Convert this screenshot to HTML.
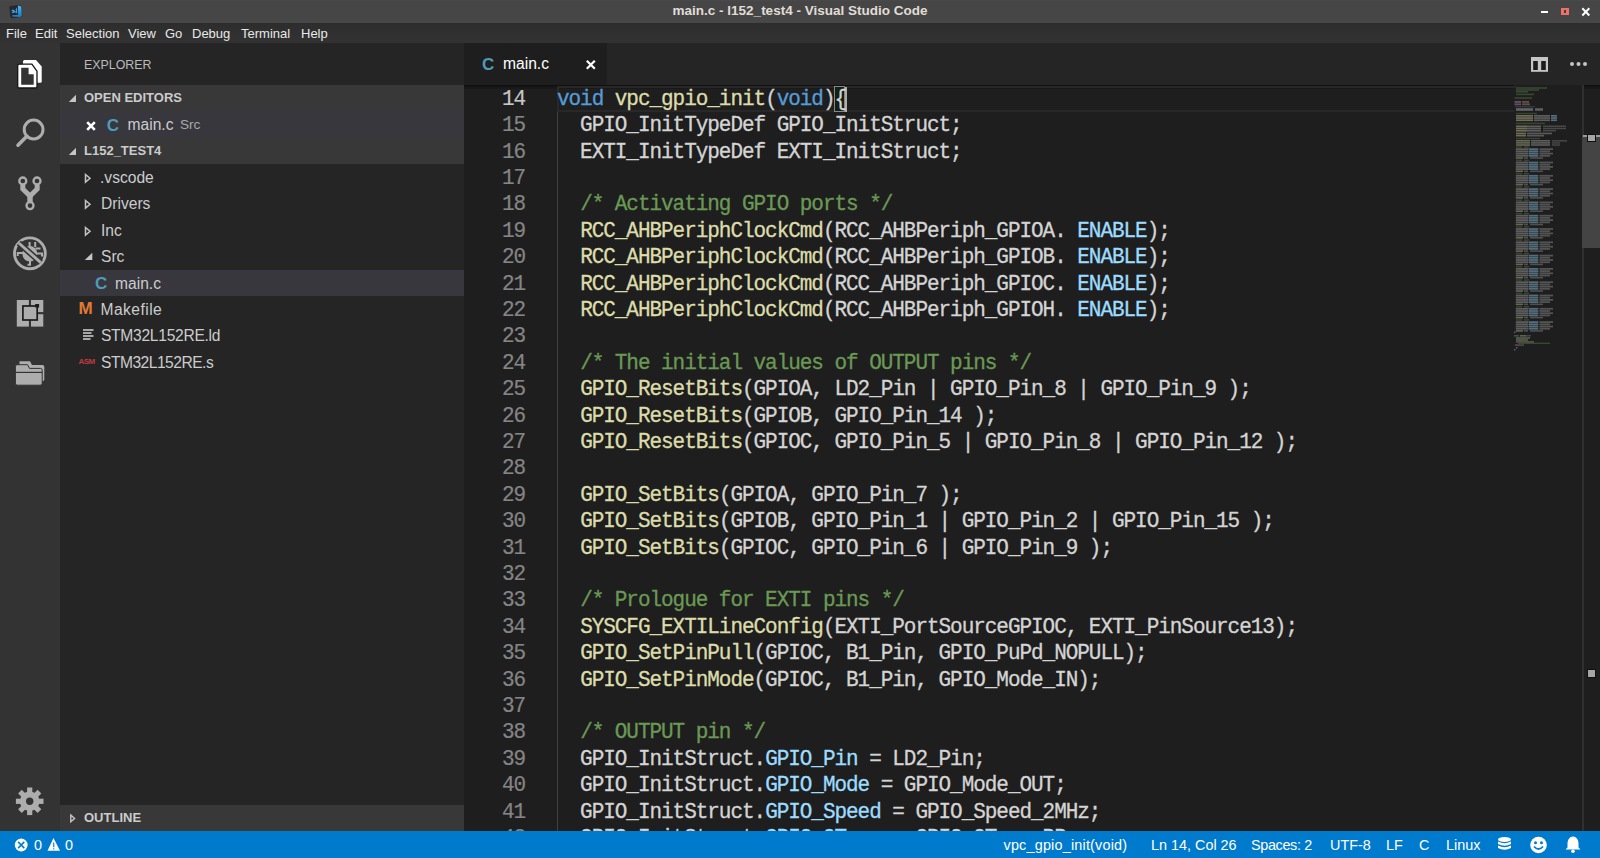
<!DOCTYPE html>
<html><head><meta charset="utf-8">
<style>
*{margin:0;padding:0;box-sizing:border-box}
html,body{width:1600px;height:858px;overflow:hidden;background:#1e1e1e;font-family:"Liberation Sans",sans-serif;position:relative}
.a{position:absolute}
.t{position:absolute;white-space:nowrap}
#title{left:0;top:0;width:1600px;height:22.5px;background:linear-gradient(#4a4a4a,#454545 8%,#474747)}
#menu{left:0;top:22.5px;width:1600px;height:20.5px;background:linear-gradient(#2d2d2d,#323232)}
.mi{position:absolute;top:26px;font-size:13px;line-height:16px;color:#e8e8e8}
#act{left:0;top:43px;width:60px;height:788px;background:#333333}
#side{left:60px;top:43px;width:404px;height:788px;background:#252526}
#tabs{left:464px;top:43px;width:1136px;height:42px;background:#252526}
#editor{left:464px;top:85px;width:1136px;height:746px;background:#1e1e1e;overflow:hidden}
#status{left:0;top:831px;width:1600px;height:27px;background:#007acc}
.st{position:absolute;top:837px;font-size:14.4px;line-height:17px;color:#ffffff;white-space:nowrap}
.hdr{position:absolute;left:60px;width:404px;height:26.4px;background:#383838}
.ht{position:absolute;font-weight:bold;font-size:13px;line-height:16px;color:#cccccc;white-space:nowrap}
.it{position:absolute;font-size:15.6px;line-height:18px;color:#cccccc;white-space:nowrap}
.code{position:absolute;left:93px;white-space:pre;transform:scaleY(1.07);transform-origin:0 18.3px;-webkit-text-stroke:0.3px currentColor;font-family:"Liberation Mono",monospace;font-size:21px;letter-spacing:-1.04px;line-height:26.4px;color:#d4d4d4}
.ln{position:absolute;left:0;width:61px;transform:scaleY(1.07);transform-origin:0 18.3px;-webkit-text-stroke:0.2px currentColor;text-align:right;font-family:"Liberation Mono",monospace;font-size:21px;letter-spacing:-1.08px;line-height:26.4px;color:#858585}
.ln.act{color:#c6c6c6}
.k{color:#569cd6}.f{color:#dcdcaa}.v{color:#9cdcfe}.c{color:#6a9955}
</style></head><body>
<!-- TITLE BAR -->
<div id="title" class="a"></div>
<div class="t" style="left:0;top:3px;width:1600px;text-align:center;font-weight:bold;font-size:13.5px;line-height:16px;color:#e0ddd6">main.c - l152_test4 - Visual Studio Code</div>
<svg class="a" style="left:0;top:0" width="30" height="22" viewBox="0 0 30 22">
  <defs><linearGradient id="lg" x1="0" y1="0" x2="0" y2="1"><stop offset="0" stop-color="#52b6f2"/><stop offset="1" stop-color="#1f78c0"/></linearGradient></defs>
  <path d="M9.3,6.3 L18,5 L21.8,6 L22.3,16.8 L11.5,18.2 L10.2,16.5 Z" fill="#25282d"/>
  <path d="M17.8,5.4 L21.3,6.6 L21.8,16.3 L19.8,17 L12,16.6 L12.3,15.2 L18.2,14.8 Z" fill="url(#lg)"/>
  <path d="M11,10.6 L13,9.6 L15,10.3 L17,7.6 L17.3,13.4 L15,12.2 L12.6,13.3 L11.5,12.3 L13.2,11.2 Z" fill="#3aa0e8"/>
  <circle cx="15.4" cy="10.6" r="0.8" fill="#1a1a2a"/>
</svg>
<div class="a" style="left:1541px;top:11px;width:7px;height:2px;background:#ffffff"></div>
<div class="a" style="left:1561px;top:8px;width:8px;height:7px;background:#f07068"></div>
<div class="a" style="left:1564.3px;top:10.3px;width:2.2px;height:3px;background:#1f4a4a"></div>
<svg class="a" style="left:1580px;top:6px" width="12" height="12" viewBox="0 0 12 12"><path d="M2.3,2.3 L9.3,9.5 M9.3,2.3 L2.3,9.5" stroke="#ffffff" stroke-width="2"/></svg>
<!-- MENU -->
<div id="menu" class="a"></div>
<div class="mi" style="left:6px">File</div><div class="mi" style="left:35px">Edit</div><div class="mi" style="left:66px">Selection</div><div class="mi" style="left:128px">View</div><div class="mi" style="left:165px">Go</div><div class="mi" style="left:192px">Debug</div><div class="mi" style="left:241px">Terminal</div><div class="mi" style="left:301px">Help</div>
<!-- ACTIVITY BAR -->
<div id="act" class="a"></div>
<svg class="a" style="left:0;top:0" width="60" height="858" viewBox="0 0 60 858">
  <!-- explorer -->
  <path d="M24.5,60 H36 L41.7,66.5 V81.3 Q41.7,82.8 40.2,82.8 H24.5 Q23,82.8 23,81.3 V61.5 Q23,60 24.5,60 Z" fill="#ffffff"/>
  <path d="M19.2,64.2 H31.9 L37,71.2 V86.5 Q37,88 35.5,88 H19.2 Q17.7,88 17.7,86.5 V65.7 Q17.7,64.2 19.2,64.2 Z" fill="#ffffff" stroke="#141414" stroke-width="1.3"/>
  <path d="M21.2,67.7 H28.6 V74.2 H33.7 V84.7 H21.2 Z" fill="#333333"/>
  <!-- search -->
  <circle cx="33.6" cy="129.5" r="9.4" fill="none" stroke="#adadad" stroke-width="3"/>
  <line x1="26.8" y1="136.3" x2="18" y2="145.2" stroke="#adadad" stroke-width="3.6" stroke-linecap="round"/>
  <!-- scm -->
  <circle cx="22.8" cy="181" r="3.5" fill="none" stroke="#adadad" stroke-width="2.3"/>
  <circle cx="37" cy="181" r="3.5" fill="none" stroke="#adadad" stroke-width="2.3"/>
  <circle cx="30" cy="205.6" r="3.5" fill="none" stroke="#adadad" stroke-width="2.3"/>
  <path d="M22.8,185 V189 L30,196 L37.2,189 V185" fill="none" stroke="#adadad" stroke-width="5" stroke-linejoin="miter"/><path d="M30,195 V202.5" fill="none" stroke="#adadad" stroke-width="5.4"/>
  <!-- debug -->
  <circle cx="29.9" cy="253.3" r="15.4" fill="none" stroke="#adadad" stroke-width="2.9"/>
  <ellipse cx="29.8" cy="253.8" rx="7.4" ry="7.8" fill="#adadad"/>
  <path d="M17.7,256 V253 H23.5 M42,256.5 V253.5 H36 M35.5,248.4 H40.5 M29.6,242 V247 M35.2,242 V247 M30,259 V264.7 H27.5" fill="none" stroke="#adadad" stroke-width="2"/>
  <line x1="18.8" y1="243" x2="40.8" y2="262.6" stroke="#333333" stroke-width="6"/>
  <line x1="18.8" y1="243" x2="40.8" y2="262.6" stroke="#adadad" stroke-width="2.9"/>
  <!-- extensions -->
  <rect x="16.8" y="300" width="26.5" height="26.6" fill="#adadad"/>
  <rect x="28.9" y="299" width="2.1" height="29" fill="#333333"/>
  <rect x="37.5" y="312.1" width="7" height="2.1" fill="#333333"/>
  <rect x="22.9" y="306" width="14.3" height="14" fill="#adadad" stroke="#1c1c1c" stroke-width="1.7"/>
  <rect x="35.2" y="304" width="3.9" height="3.5" fill="#1c1c1c"/>
  <!-- folder -->
  <path d="M19.5,361.2 H30 L32,364.9 H42.5 Q44.3,364.9 44.3,366.7 V379.5 Q44.3,381 42.8,381 H19.5 Z" fill="#adadad"/>
  <path d="M17.2,364.7 H27.5 L29.5,368.4 H40.4 Q42.2,368.4 42.2,370.2 V383.2 Q42.2,385.2 40.2,385.2 H17.4 Q15.4,385.2 15.4,383.2 V366.5 Q15.4,364.7 17.2,364.7 Z" fill="#adadad" stroke="#333333" stroke-width="1"/>
  <rect x="15.4" y="371.8" width="26.8" height="1.2" fill="#333333"/>
  <!-- gear -->
  <g transform="translate(29.7,801.3)" fill="#adadad">
    <circle r="9.8"/>
    <rect x="-2.6" y="-13.8" width="5.2" height="27.6"/>
    <rect x="-13.8" y="-2.6" width="27.6" height="5.2"/>
    <rect x="-2.6" y="-13.8" width="5.2" height="27.6" transform="rotate(45)"/>
    <rect x="-13.8" y="-2.6" width="27.6" height="5.2" transform="rotate(45)"/>
    <circle r="3.7" fill="#333333"/>
  </g>
</svg>

<!-- SIDEBAR -->
<div id="side" class="a"></div>
<div class="t" style="left:84px;top:57px;font-size:12.4px;line-height:16px;color:#bbbbbb">EXPLORER</div>
<div class="hdr" style="top:85px"></div>
<svg class="a" style="left:68px;top:94px" width="9" height="9" viewBox="0 0 9 9"><path d="M8,0.8 V8 H0.8 Z" fill="#c5c5c5"/></svg>
<div class="ht" style="left:84px;top:90px">OPEN EDITORS</div>
<div class="a" style="left:60px;top:111.4px;width:404px;height:26.4px;background:#37373d"></div>
<svg class="a" style="left:85px;top:119.5px" width="12" height="12" viewBox="0 0 12 12"><path d="M2.2,2.2 L9.8,9.8 M9.8,2.2 L2.2,9.8" stroke="#ffffff" stroke-width="2.6"/></svg>
<div class="t" style="left:106.8px;top:115.5px;font-weight:bold;font-size:17px;line-height:20px;color:#519aba">C</div>
<div class="it" style="left:127.5px;top:116px">main.c</div>
<div class="t" style="left:180px;top:116px;font-size:13.6px;line-height:17px;color:#a8a8a8">Src</div>
<div class="hdr" style="top:137.8px"></div>
<svg class="a" style="left:68px;top:147px" width="9" height="9" viewBox="0 0 9 9"><path d="M8,0.8 V8 H0.8 Z" fill="#c5c5c5"/></svg>
<div class="ht" style="left:84px;top:142.8px">L152_TEST4</div>
<!-- tree -->
<svg class="a" style="left:84px;top:173px" width="8" height="11" viewBox="0 0 8 11"><path d="M1.5,1.5 L6,5.3 L1.5,9.1 Z" fill="none" stroke="#c5c5c5" stroke-width="1.5"/></svg>
<div class="it" style="left:100px;top:169.0px">.vscode</div>
<svg class="a" style="left:84px;top:199.4px" width="8" height="11" viewBox="0 0 8 11"><path d="M1.5,1.5 L6,5.3 L1.5,9.1 Z" fill="none" stroke="#c5c5c5" stroke-width="1.5"/></svg>
<div class="it" style="left:101px;top:195.4px">Drivers</div>
<svg class="a" style="left:84px;top:225.8px" width="8" height="11" viewBox="0 0 8 11"><path d="M1.5,1.5 L6,5.3 L1.5,9.1 Z" fill="none" stroke="#c5c5c5" stroke-width="1.5"/></svg>
<div class="it" style="left:101px;top:221.8px">Inc</div>
<svg class="a" style="left:84px;top:252px" width="9" height="9" viewBox="0 0 9 9"><path d="M8.3,0.8 V8 H0.8 Z" fill="#c5c5c5"/></svg>
<div class="it" style="left:101px;top:248.2px">Src</div>
<div class="a" style="left:60px;top:269.8px;width:404px;height:26.4px;background:#37373d"></div>
<div class="t" style="left:95px;top:273.5px;font-weight:bold;font-size:17px;line-height:20px;color:#519aba">C</div>
<div class="it" style="left:115px;top:274.6px">main.c</div>
<div class="t" style="left:78.5px;top:298.5px;font-weight:bold;font-size:17px;line-height:20px;color:#e37933">M</div>
<div class="it" style="left:100.5px;top:301.0px;letter-spacing:0.45px">Makefile</div>
<svg class="a" style="left:82px;top:328px" width="12" height="13" viewBox="0 0 12 13"><path d="M1,2 H11.5 M1,5 H9.5 M1,8 H11.5 M1,11 H8.5" stroke="#d4d4d4" stroke-width="1.3"/></svg>
<div class="it" style="left:101px;top:327.4px;letter-spacing:-0.28px">STM32L152RE.ld</div>
<div class="t" style="left:78.5px;top:356.5px;font-weight:bold;font-size:8px;line-height:9px;color:#c0393f;letter-spacing:-0.6px">ASM</div>
<div class="it" style="left:101px;top:353.8px;letter-spacing:-0.5px">STM32L152RE.s</div>
<!-- outline -->
<div class="hdr" style="top:805.2px"></div>
<svg class="a" style="left:68.5px;top:812.5px" width="8" height="11" viewBox="0 0 8 11"><path d="M1.8,2 L5.6,5.4 L1.8,8.8 Z" fill="none" stroke="#c5c5c5" stroke-width="1.4"/></svg>
<div class="ht" style="left:84px;top:810px">OUTLINE</div>

<!-- TABS -->
<div id="tabs" class="a"></div>
<div class="a" style="left:464px;top:43px;width:143px;height:42px;background:#1e1e1e"></div>
<div class="t" style="left:482px;top:55px;font-weight:bold;font-size:17px;line-height:20px;color:#519aba">C</div>
<div class="t" style="left:503px;top:55px;font-size:15.6px;line-height:18px;color:#ffffff">main.c</div>
<svg class="a" style="left:585px;top:59px" width="12" height="12" viewBox="0 0 12 12"><path d="M1.8,1.8 L9.8,9.8 M9.8,1.8 L1.8,9.8" stroke="#ffffff" stroke-width="2.2"/></svg>
<svg class="a" style="left:1528px;top:54px" width="24" height="20" viewBox="0 0 24 20"><rect x="3" y="3" width="17" height="14.8" fill="#c5c5c5"/><rect x="5.2" y="7" width="4.6" height="9" fill="#1c1c1c"/><rect x="13.2" y="7" width="4.6" height="9" fill="#1c1c1c"/></svg>
<svg class="a" style="left:1566px;top:58px" width="24" height="12" viewBox="0 0 24 12">
  <circle cx="6" cy="6" r="2" fill="#c5c5c5"/><circle cx="12.5" cy="6" r="2" fill="#c5c5c5"/><circle cx="19" cy="6" r="2" fill="#c5c5c5"/>
</svg>

<!-- EDITOR -->
<div id="editor" class="a">
<div class="a" style="left:0;top:0;width:1136px;height:3.6px;box-shadow:#000 0 6px 6px -6px inset"></div>
<div class="a" style="left:93px;top:0.8px;width:1000px;height:26.4px;border:2.4px solid #282828"></div>
<div class="a" style="left:369.8px;top:0.8px;width:11.4px;height:26.2px;background:#132016;border:1.2px solid #888888"></div>
<div class="a" style="left:380.8px;top:1.6px;width:2.6px;height:25px;background:#aeafad"></div>
<div class="a" style="left:93px;top:26.7px;width:1.2px;height:720px;background:#404040"></div>
<div class="ln act" style="top:1.7px">14</div>
<div class="code" style="top:1.7px"><span class="k">void</span> <span class="f">vpc_gpio_init</span>(<span class="k">void</span>){</div>
<div class="ln" style="top:28.1px">15</div>
<div class="code" style="top:28.1px">  GPIO_InitTypeDef GPIO_InitStruct;</div>
<div class="ln" style="top:54.5px">16</div>
<div class="code" style="top:54.5px">  EXTI_InitTypeDef EXTI_InitStruct;</div>
<div class="ln" style="top:80.9px">17</div>
<div class="ln" style="top:107.3px">18</div>
<div class="code" style="top:107.3px">  <span class="c">/* Activating GPIO ports */</span></div>
<div class="ln" style="top:133.7px">19</div>
<div class="code" style="top:133.7px">  <span class="f">RCC_AHBPeriphClockCmd</span>(RCC_AHBPeriph_GPIOA. <span class="v">ENABLE</span>);</div>
<div class="ln" style="top:160.1px">20</div>
<div class="code" style="top:160.1px">  <span class="f">RCC_AHBPeriphClockCmd</span>(RCC_AHBPeriph_GPIOB. <span class="v">ENABLE</span>);</div>
<div class="ln" style="top:186.5px">21</div>
<div class="code" style="top:186.5px">  <span class="f">RCC_AHBPeriphClockCmd</span>(RCC_AHBPeriph_GPIOC. <span class="v">ENABLE</span>);</div>
<div class="ln" style="top:212.9px">22</div>
<div class="code" style="top:212.9px">  <span class="f">RCC_AHBPeriphClockCmd</span>(RCC_AHBPeriph_GPIOH. <span class="v">ENABLE</span>);</div>
<div class="ln" style="top:239.3px">23</div>
<div class="ln" style="top:265.7px">24</div>
<div class="code" style="top:265.7px">  <span class="c">/* The initial values of OUTPUT pins */</span></div>
<div class="ln" style="top:292.1px">25</div>
<div class="code" style="top:292.1px">  <span class="f">GPIO_ResetBits</span>(GPIOA, LD2_Pin | GPIO_Pin_8 | GPIO_Pin_9 );</div>
<div class="ln" style="top:318.5px">26</div>
<div class="code" style="top:318.5px">  <span class="f">GPIO_ResetBits</span>(GPIOB, GPIO_Pin_14 );</div>
<div class="ln" style="top:344.9px">27</div>
<div class="code" style="top:344.9px">  <span class="f">GPIO_ResetBits</span>(GPIOC, GPIO_Pin_5 | GPIO_Pin_8 | GPIO_Pin_12 );</div>
<div class="ln" style="top:371.3px">28</div>
<div class="ln" style="top:397.7px">29</div>
<div class="code" style="top:397.7px">  <span class="f">GPIO_SetBits</span>(GPIOA, GPIO_Pin_7 );</div>
<div class="ln" style="top:424.1px">30</div>
<div class="code" style="top:424.1px">  <span class="f">GPIO_SetBits</span>(GPIOB, GPIO_Pin_1 | GPIO_Pin_2 | GPIO_Pin_15 );</div>
<div class="ln" style="top:450.5px">31</div>
<div class="code" style="top:450.5px">  <span class="f">GPIO_SetBits</span>(GPIOC, GPIO_Pin_6 | GPIO_Pin_9 );</div>
<div class="ln" style="top:476.9px">32</div>
<div class="ln" style="top:503.3px">33</div>
<div class="code" style="top:503.3px">  <span class="c">/* Prologue for EXTI pins */</span></div>
<div class="ln" style="top:529.7px">34</div>
<div class="code" style="top:529.7px">  <span class="f">SYSCFG_EXTILineConfig</span>(EXTI_PortSourceGPIOC, EXTI_PinSource13);</div>
<div class="ln" style="top:556.1px">35</div>
<div class="code" style="top:556.1px">  <span class="f">GPIO_SetPinPull</span>(GPIOC, B1_Pin, GPIO_PuPd_NOPULL);</div>
<div class="ln" style="top:582.5px">36</div>
<div class="code" style="top:582.5px">  <span class="f">GPIO_SetPinMode</span>(GPIOC, B1_Pin, GPIO_Mode_IN);</div>
<div class="ln" style="top:608.9px">37</div>
<div class="ln" style="top:635.3px">38</div>
<div class="code" style="top:635.3px">  <span class="c">/* OUTPUT pin */</span></div>
<div class="ln" style="top:661.7px">39</div>
<div class="code" style="top:661.7px">  GPIO_InitStruct.<span class="v">GPIO_Pin</span> = LD2_Pin;</div>
<div class="ln" style="top:688.1px">40</div>
<div class="code" style="top:688.1px">  GPIO_InitStruct.<span class="v">GPIO_Mode</span> = GPIO_Mode_OUT;</div>
<div class="ln" style="top:714.5px">41</div>
<div class="code" style="top:714.5px">  GPIO_InitStruct.<span class="v">GPIO_Speed</span> = GPIO_Speed_2MHz;</div>
<div class="ln" style="top:740.9px">42</div>
<div class="code" style="top:740.9px">  GPIO_InitStruct.<span class="v">GPIO_OType</span> = GPIO_OType_PP;</div>
</div>
<div class="a" style="left:1514px;top:85px;width:68px;height:746px;background:#1e1e1e"></div><svg class="a" style="left:0;top:0" width="1600" height="858" viewBox="0 0 1600 858"><rect x="1514.5" y="86.0" width="1.0" height="1.2" fill="#6a9955" fill-opacity="0.39"/><rect x="1516.0" y="87.2" width="31.0" height="1.6" fill="#6a9955" fill-opacity="0.35"/><rect x="1516.0" y="89.2" width="23.0" height="1.6" fill="#6a9955" fill-opacity="0.35"/><rect x="1516.0" y="91.0" width="12.0" height="1.6" fill="#6a9955" fill-opacity="0.35"/><rect x="1516.0" y="93.6" width="18.0" height="1.6" fill="#6a9955" fill-opacity="0.35"/><rect x="1514.5" y="97.2" width="17.5" height="1.6" fill="#6a9955" fill-opacity="0.35"/><rect x="1514.5" y="101.0" width="6.5" height="1.8" fill="#c586c0" fill-opacity="0.45"/><rect x="1522.0" y="101.0" width="7.0" height="1.8" fill="#ce9178" fill-opacity="0.42"/><rect x="1514.5" y="103.4" width="6.5" height="1.8" fill="#c586c0" fill-opacity="0.45"/><rect x="1522.0" y="103.4" width="8.0" height="1.8" fill="#ce9178" fill-opacity="0.42"/><rect x="1515.0" y="106.0" width="20.0" height="1.4" fill="#569cd6" fill-opacity="0.24"/><rect x="1516.0" y="108.2" width="17.0" height="2.6" fill="#d4d4d4" fill-opacity="0.39"/><rect x="1535.0" y="108.2" width="8.0" height="2.6" fill="#d4d4d4" fill-opacity="0.35"/><rect x="1516.0" y="112.8" width="21.0" height="1.4" fill="#6a9955" fill-opacity="0.32"/><rect x="1516.0" y="115.0" width="17.0" height="1.7" fill="#dcdcaa" fill-opacity="0.42"/><rect x="1534.0" y="115.0" width="16.0" height="1.7" fill="#d4d4d4" fill-opacity="0.35"/><rect x="1551.0" y="115.0" width="6.0" height="1.7" fill="#9cdcfe" fill-opacity="0.42"/><rect x="1516.0" y="117.2" width="17.0" height="1.7" fill="#dcdcaa" fill-opacity="0.42"/><rect x="1534.0" y="117.2" width="16.0" height="1.7" fill="#d4d4d4" fill-opacity="0.35"/><rect x="1551.0" y="117.2" width="6.0" height="1.7" fill="#9cdcfe" fill-opacity="0.42"/><rect x="1516.0" y="119.4" width="17.0" height="1.7" fill="#dcdcaa" fill-opacity="0.42"/><rect x="1534.0" y="119.4" width="16.0" height="1.7" fill="#d4d4d4" fill-opacity="0.35"/><rect x="1551.0" y="119.4" width="6.0" height="1.7" fill="#9cdcfe" fill-opacity="0.42"/><rect x="1516.0" y="122.6" width="29.0" height="1.6" fill="#6a9955" fill-opacity="0.32"/><rect x="1516.0" y="125.5" width="11.0" height="1.7" fill="#dcdcaa" fill-opacity="0.42"/><rect x="1527.0" y="125.5" width="14.0" height="1.7" fill="#d4d4d4" fill-opacity="0.35"/><rect x="1543.0" y="125.5" width="23.0" height="1.5" fill="#d4d4d4" fill-opacity="0.24"/><rect x="1516.0" y="127.7" width="11.0" height="1.7" fill="#dcdcaa" fill-opacity="0.42"/><rect x="1527.0" y="127.7" width="14.0" height="1.7" fill="#d4d4d4" fill-opacity="0.35"/><rect x="1543.0" y="127.7" width="23.0" height="1.5" fill="#d4d4d4" fill-opacity="0.24"/><rect x="1516.0" y="129.9" width="11.0" height="1.7" fill="#dcdcaa" fill-opacity="0.42"/><rect x="1527.0" y="129.9" width="14.0" height="1.7" fill="#d4d4d4" fill-opacity="0.35"/><rect x="1543.0" y="129.9" width="13.0" height="1.5" fill="#d4d4d4" fill-opacity="0.24"/><rect x="1516.0" y="132.6" width="10.0" height="1.7" fill="#dcdcaa" fill-opacity="0.42"/><rect x="1527.0" y="132.6" width="25.0" height="1.7" fill="#d4d4d4" fill-opacity="0.32"/><rect x="1516.0" y="134.8" width="10.0" height="1.7" fill="#dcdcaa" fill-opacity="0.42"/><rect x="1527.0" y="134.8" width="17.0" height="1.7" fill="#d4d4d4" fill-opacity="0.32"/><rect x="1516.0" y="137.8" width="24.0" height="1.4" fill="#6a9955" fill-opacity="0.32"/><rect x="1516.0" y="140.0" width="14.0" height="1.6" fill="#dcdcaa" fill-opacity="0.39"/><rect x="1531.0" y="140.0" width="19.0" height="1.6" fill="#d4d4d4" fill-opacity="0.35"/><rect x="1552.0" y="140.0" width="15.0" height="1.6" fill="#d4d4d4" fill-opacity="0.21"/><rect x="1516.0" y="142.1" width="14.0" height="1.6" fill="#dcdcaa" fill-opacity="0.39"/><rect x="1531.0" y="142.1" width="19.0" height="1.6" fill="#d4d4d4" fill-opacity="0.35"/><rect x="1552.0" y="142.1" width="8.0" height="1.6" fill="#d4d4d4" fill-opacity="0.21"/><rect x="1516.0" y="144.2" width="14.0" height="1.6" fill="#dcdcaa" fill-opacity="0.39"/><rect x="1531.0" y="144.2" width="19.0" height="1.6" fill="#d4d4d4" fill-opacity="0.35"/><rect x="1552.0" y="144.2" width="8.0" height="1.6" fill="#d4d4d4" fill-opacity="0.21"/><rect x="1516.0" y="146.3" width="6.0" height="1.5" fill="#6a9955" fill-opacity="0.35"/><rect x="1524.0" y="146.3" width="5.0" height="1.5" fill="#6a9955" fill-opacity="0.35"/><rect x="1515.8" y="148.3" width="12.7" height="1.8" fill="#d4d4d4" fill-opacity="0.35"/><rect x="1529.0" y="148.3" width="9.3" height="1.8" fill="#9cdcfe" fill-opacity="0.42"/><rect x="1539.5" y="148.3" width="13.5" height="1.8" fill="#d4d4d4" fill-opacity="0.29"/><rect x="1515.8" y="150.5" width="12.7" height="1.8" fill="#d4d4d4" fill-opacity="0.35"/><rect x="1529.0" y="150.5" width="9.3" height="1.8" fill="#9cdcfe" fill-opacity="0.42"/><rect x="1539.5" y="150.5" width="10.5" height="1.8" fill="#d4d4d4" fill-opacity="0.29"/><rect x="1515.8" y="152.7" width="12.7" height="1.8" fill="#d4d4d4" fill-opacity="0.35"/><rect x="1529.0" y="152.7" width="9.3" height="1.8" fill="#9cdcfe" fill-opacity="0.42"/><rect x="1539.5" y="152.7" width="13.5" height="1.8" fill="#d4d4d4" fill-opacity="0.29"/><rect x="1515.8" y="154.9" width="12.7" height="1.8" fill="#d4d4d4" fill-opacity="0.35"/><rect x="1529.0" y="154.9" width="9.3" height="1.8" fill="#9cdcfe" fill-opacity="0.42"/><rect x="1539.5" y="154.9" width="10.5" height="1.8" fill="#d4d4d4" fill-opacity="0.29"/><rect x="1515.8" y="157.2" width="7.2" height="1.6" fill="#dcdcaa" fill-opacity="0.39"/><rect x="1524.0" y="157.2" width="4.0" height="1.6" fill="#d4d4d4" fill-opacity="0.28"/><rect x="1530.0" y="157.2" width="13.0" height="1.6" fill="#d4d4d4" fill-opacity="0.28"/><rect x="1516.0" y="159.6" width="6.0" height="1.5" fill="#6a9955" fill-opacity="0.35"/><rect x="1524.0" y="159.6" width="5.0" height="1.5" fill="#6a9955" fill-opacity="0.35"/><rect x="1515.8" y="161.6" width="12.7" height="1.8" fill="#d4d4d4" fill-opacity="0.35"/><rect x="1529.0" y="161.6" width="9.3" height="1.8" fill="#9cdcfe" fill-opacity="0.42"/><rect x="1539.5" y="161.6" width="13.5" height="1.8" fill="#d4d4d4" fill-opacity="0.29"/><rect x="1515.8" y="163.8" width="12.7" height="1.8" fill="#d4d4d4" fill-opacity="0.35"/><rect x="1529.0" y="163.8" width="9.3" height="1.8" fill="#9cdcfe" fill-opacity="0.42"/><rect x="1539.5" y="163.8" width="10.5" height="1.8" fill="#d4d4d4" fill-opacity="0.29"/><rect x="1515.8" y="166.0" width="12.7" height="1.8" fill="#d4d4d4" fill-opacity="0.35"/><rect x="1529.0" y="166.0" width="9.3" height="1.8" fill="#9cdcfe" fill-opacity="0.42"/><rect x="1539.5" y="166.0" width="13.5" height="1.8" fill="#d4d4d4" fill-opacity="0.29"/><rect x="1515.8" y="168.2" width="12.7" height="1.8" fill="#d4d4d4" fill-opacity="0.35"/><rect x="1529.0" y="168.2" width="9.3" height="1.8" fill="#9cdcfe" fill-opacity="0.42"/><rect x="1539.5" y="168.2" width="10.5" height="1.8" fill="#d4d4d4" fill-opacity="0.29"/><rect x="1515.8" y="170.5" width="7.2" height="1.6" fill="#dcdcaa" fill-opacity="0.39"/><rect x="1524.0" y="170.5" width="4.0" height="1.6" fill="#d4d4d4" fill-opacity="0.28"/><rect x="1530.0" y="170.5" width="13.0" height="1.6" fill="#d4d4d4" fill-opacity="0.28"/><rect x="1516.0" y="172.9" width="6.0" height="1.5" fill="#6a9955" fill-opacity="0.35"/><rect x="1524.0" y="172.9" width="5.0" height="1.5" fill="#6a9955" fill-opacity="0.35"/><rect x="1515.8" y="174.9" width="12.7" height="1.8" fill="#d4d4d4" fill-opacity="0.35"/><rect x="1529.0" y="174.9" width="9.3" height="1.8" fill="#9cdcfe" fill-opacity="0.42"/><rect x="1539.5" y="174.9" width="13.5" height="1.8" fill="#d4d4d4" fill-opacity="0.29"/><rect x="1515.8" y="177.1" width="12.7" height="1.8" fill="#d4d4d4" fill-opacity="0.35"/><rect x="1529.0" y="177.1" width="9.3" height="1.8" fill="#9cdcfe" fill-opacity="0.42"/><rect x="1539.5" y="177.1" width="10.5" height="1.8" fill="#d4d4d4" fill-opacity="0.29"/><rect x="1515.8" y="179.3" width="12.7" height="1.8" fill="#d4d4d4" fill-opacity="0.35"/><rect x="1529.0" y="179.3" width="9.3" height="1.8" fill="#9cdcfe" fill-opacity="0.42"/><rect x="1539.5" y="179.3" width="13.5" height="1.8" fill="#d4d4d4" fill-opacity="0.29"/><rect x="1515.8" y="181.5" width="12.7" height="1.8" fill="#d4d4d4" fill-opacity="0.35"/><rect x="1529.0" y="181.5" width="9.3" height="1.8" fill="#9cdcfe" fill-opacity="0.42"/><rect x="1539.5" y="181.5" width="10.5" height="1.8" fill="#d4d4d4" fill-opacity="0.29"/><rect x="1515.8" y="183.8" width="7.2" height="1.6" fill="#dcdcaa" fill-opacity="0.39"/><rect x="1524.0" y="183.8" width="4.0" height="1.6" fill="#d4d4d4" fill-opacity="0.28"/><rect x="1530.0" y="183.8" width="13.0" height="1.6" fill="#d4d4d4" fill-opacity="0.28"/><rect x="1516.0" y="186.2" width="6.0" height="1.5" fill="#6a9955" fill-opacity="0.35"/><rect x="1524.0" y="186.2" width="5.0" height="1.5" fill="#6a9955" fill-opacity="0.35"/><rect x="1515.8" y="188.2" width="12.7" height="1.8" fill="#d4d4d4" fill-opacity="0.35"/><rect x="1529.0" y="188.2" width="9.3" height="1.8" fill="#9cdcfe" fill-opacity="0.42"/><rect x="1539.5" y="188.2" width="13.5" height="1.8" fill="#d4d4d4" fill-opacity="0.29"/><rect x="1515.8" y="190.4" width="12.7" height="1.8" fill="#d4d4d4" fill-opacity="0.35"/><rect x="1529.0" y="190.4" width="9.3" height="1.8" fill="#9cdcfe" fill-opacity="0.42"/><rect x="1539.5" y="190.4" width="10.5" height="1.8" fill="#d4d4d4" fill-opacity="0.29"/><rect x="1515.8" y="192.6" width="12.7" height="1.8" fill="#d4d4d4" fill-opacity="0.35"/><rect x="1529.0" y="192.6" width="9.3" height="1.8" fill="#9cdcfe" fill-opacity="0.42"/><rect x="1539.5" y="192.6" width="13.5" height="1.8" fill="#d4d4d4" fill-opacity="0.29"/><rect x="1515.8" y="194.8" width="12.7" height="1.8" fill="#d4d4d4" fill-opacity="0.35"/><rect x="1529.0" y="194.8" width="9.3" height="1.8" fill="#9cdcfe" fill-opacity="0.42"/><rect x="1539.5" y="194.8" width="10.5" height="1.8" fill="#d4d4d4" fill-opacity="0.29"/><rect x="1515.8" y="197.1" width="7.2" height="1.6" fill="#dcdcaa" fill-opacity="0.39"/><rect x="1524.0" y="197.1" width="4.0" height="1.6" fill="#d4d4d4" fill-opacity="0.28"/><rect x="1530.0" y="197.1" width="13.0" height="1.6" fill="#d4d4d4" fill-opacity="0.28"/><rect x="1516.0" y="199.5" width="6.0" height="1.5" fill="#6a9955" fill-opacity="0.35"/><rect x="1524.0" y="199.5" width="5.0" height="1.5" fill="#6a9955" fill-opacity="0.35"/><rect x="1515.8" y="201.5" width="12.7" height="1.8" fill="#d4d4d4" fill-opacity="0.35"/><rect x="1529.0" y="201.5" width="9.3" height="1.8" fill="#9cdcfe" fill-opacity="0.42"/><rect x="1539.5" y="201.5" width="13.5" height="1.8" fill="#d4d4d4" fill-opacity="0.29"/><rect x="1515.8" y="203.7" width="12.7" height="1.8" fill="#d4d4d4" fill-opacity="0.35"/><rect x="1529.0" y="203.7" width="9.3" height="1.8" fill="#9cdcfe" fill-opacity="0.42"/><rect x="1539.5" y="203.7" width="10.5" height="1.8" fill="#d4d4d4" fill-opacity="0.29"/><rect x="1515.8" y="205.9" width="12.7" height="1.8" fill="#d4d4d4" fill-opacity="0.35"/><rect x="1529.0" y="205.9" width="9.3" height="1.8" fill="#9cdcfe" fill-opacity="0.42"/><rect x="1539.5" y="205.9" width="13.5" height="1.8" fill="#d4d4d4" fill-opacity="0.29"/><rect x="1515.8" y="208.1" width="12.7" height="1.8" fill="#d4d4d4" fill-opacity="0.35"/><rect x="1529.0" y="208.1" width="9.3" height="1.8" fill="#9cdcfe" fill-opacity="0.42"/><rect x="1539.5" y="208.1" width="10.5" height="1.8" fill="#d4d4d4" fill-opacity="0.29"/><rect x="1515.8" y="210.4" width="7.2" height="1.6" fill="#dcdcaa" fill-opacity="0.39"/><rect x="1524.0" y="210.4" width="4.0" height="1.6" fill="#d4d4d4" fill-opacity="0.28"/><rect x="1530.0" y="210.4" width="13.0" height="1.6" fill="#d4d4d4" fill-opacity="0.28"/><rect x="1516.0" y="212.8" width="6.0" height="1.5" fill="#6a9955" fill-opacity="0.35"/><rect x="1524.0" y="212.8" width="5.0" height="1.5" fill="#6a9955" fill-opacity="0.35"/><rect x="1515.8" y="214.8" width="12.7" height="1.8" fill="#d4d4d4" fill-opacity="0.35"/><rect x="1529.0" y="214.8" width="9.3" height="1.8" fill="#9cdcfe" fill-opacity="0.42"/><rect x="1539.5" y="214.8" width="13.5" height="1.8" fill="#d4d4d4" fill-opacity="0.29"/><rect x="1515.8" y="217.0" width="12.7" height="1.8" fill="#d4d4d4" fill-opacity="0.35"/><rect x="1529.0" y="217.0" width="9.3" height="1.8" fill="#9cdcfe" fill-opacity="0.42"/><rect x="1539.5" y="217.0" width="10.5" height="1.8" fill="#d4d4d4" fill-opacity="0.29"/><rect x="1515.8" y="219.2" width="12.7" height="1.8" fill="#d4d4d4" fill-opacity="0.35"/><rect x="1529.0" y="219.2" width="9.3" height="1.8" fill="#9cdcfe" fill-opacity="0.42"/><rect x="1539.5" y="219.2" width="13.5" height="1.8" fill="#d4d4d4" fill-opacity="0.29"/><rect x="1515.8" y="221.4" width="12.7" height="1.8" fill="#d4d4d4" fill-opacity="0.35"/><rect x="1529.0" y="221.4" width="9.3" height="1.8" fill="#9cdcfe" fill-opacity="0.42"/><rect x="1539.5" y="221.4" width="10.5" height="1.8" fill="#d4d4d4" fill-opacity="0.29"/><rect x="1515.8" y="223.7" width="7.2" height="1.6" fill="#dcdcaa" fill-opacity="0.39"/><rect x="1524.0" y="223.7" width="4.0" height="1.6" fill="#d4d4d4" fill-opacity="0.28"/><rect x="1530.0" y="223.7" width="13.0" height="1.6" fill="#d4d4d4" fill-opacity="0.28"/><rect x="1516.0" y="226.1" width="6.0" height="1.5" fill="#6a9955" fill-opacity="0.35"/><rect x="1524.0" y="226.1" width="5.0" height="1.5" fill="#6a9955" fill-opacity="0.35"/><rect x="1515.8" y="228.1" width="12.7" height="1.8" fill="#d4d4d4" fill-opacity="0.35"/><rect x="1529.0" y="228.1" width="9.3" height="1.8" fill="#9cdcfe" fill-opacity="0.42"/><rect x="1539.5" y="228.1" width="13.5" height="1.8" fill="#d4d4d4" fill-opacity="0.29"/><rect x="1515.8" y="230.3" width="12.7" height="1.8" fill="#d4d4d4" fill-opacity="0.35"/><rect x="1529.0" y="230.3" width="9.3" height="1.8" fill="#9cdcfe" fill-opacity="0.42"/><rect x="1539.5" y="230.3" width="10.5" height="1.8" fill="#d4d4d4" fill-opacity="0.29"/><rect x="1515.8" y="232.5" width="12.7" height="1.8" fill="#d4d4d4" fill-opacity="0.35"/><rect x="1529.0" y="232.5" width="9.3" height="1.8" fill="#9cdcfe" fill-opacity="0.42"/><rect x="1539.5" y="232.5" width="13.5" height="1.8" fill="#d4d4d4" fill-opacity="0.29"/><rect x="1515.8" y="234.7" width="12.7" height="1.8" fill="#d4d4d4" fill-opacity="0.35"/><rect x="1529.0" y="234.7" width="9.3" height="1.8" fill="#9cdcfe" fill-opacity="0.42"/><rect x="1539.5" y="234.7" width="10.5" height="1.8" fill="#d4d4d4" fill-opacity="0.29"/><rect x="1515.8" y="237.0" width="7.2" height="1.6" fill="#dcdcaa" fill-opacity="0.39"/><rect x="1524.0" y="237.0" width="4.0" height="1.6" fill="#d4d4d4" fill-opacity="0.28"/><rect x="1530.0" y="237.0" width="13.0" height="1.6" fill="#d4d4d4" fill-opacity="0.28"/><rect x="1516.0" y="239.4" width="6.0" height="1.5" fill="#6a9955" fill-opacity="0.35"/><rect x="1524.0" y="239.4" width="5.0" height="1.5" fill="#6a9955" fill-opacity="0.35"/><rect x="1515.8" y="241.4" width="12.7" height="1.8" fill="#d4d4d4" fill-opacity="0.35"/><rect x="1529.0" y="241.4" width="9.3" height="1.8" fill="#9cdcfe" fill-opacity="0.42"/><rect x="1539.5" y="241.4" width="13.5" height="1.8" fill="#d4d4d4" fill-opacity="0.29"/><rect x="1515.8" y="243.6" width="12.7" height="1.8" fill="#d4d4d4" fill-opacity="0.35"/><rect x="1529.0" y="243.6" width="9.3" height="1.8" fill="#9cdcfe" fill-opacity="0.42"/><rect x="1539.5" y="243.6" width="10.5" height="1.8" fill="#d4d4d4" fill-opacity="0.29"/><rect x="1515.8" y="245.8" width="12.7" height="1.8" fill="#d4d4d4" fill-opacity="0.35"/><rect x="1529.0" y="245.8" width="9.3" height="1.8" fill="#9cdcfe" fill-opacity="0.42"/><rect x="1539.5" y="245.8" width="13.5" height="1.8" fill="#d4d4d4" fill-opacity="0.29"/><rect x="1515.8" y="248.0" width="12.7" height="1.8" fill="#d4d4d4" fill-opacity="0.35"/><rect x="1529.0" y="248.0" width="9.3" height="1.8" fill="#9cdcfe" fill-opacity="0.42"/><rect x="1539.5" y="248.0" width="10.5" height="1.8" fill="#d4d4d4" fill-opacity="0.29"/><rect x="1515.8" y="250.3" width="7.2" height="1.6" fill="#dcdcaa" fill-opacity="0.39"/><rect x="1524.0" y="250.3" width="4.0" height="1.6" fill="#d4d4d4" fill-opacity="0.28"/><rect x="1530.0" y="250.3" width="13.0" height="1.6" fill="#d4d4d4" fill-opacity="0.28"/><rect x="1516.0" y="252.7" width="6.0" height="1.5" fill="#6a9955" fill-opacity="0.35"/><rect x="1524.0" y="252.7" width="5.0" height="1.5" fill="#6a9955" fill-opacity="0.35"/><rect x="1515.8" y="254.7" width="12.7" height="1.8" fill="#d4d4d4" fill-opacity="0.35"/><rect x="1529.0" y="254.7" width="9.3" height="1.8" fill="#9cdcfe" fill-opacity="0.42"/><rect x="1539.5" y="254.7" width="13.5" height="1.8" fill="#d4d4d4" fill-opacity="0.29"/><rect x="1515.8" y="256.9" width="12.7" height="1.8" fill="#d4d4d4" fill-opacity="0.35"/><rect x="1529.0" y="256.9" width="9.3" height="1.8" fill="#9cdcfe" fill-opacity="0.42"/><rect x="1539.5" y="256.9" width="10.5" height="1.8" fill="#d4d4d4" fill-opacity="0.29"/><rect x="1515.8" y="259.1" width="12.7" height="1.8" fill="#d4d4d4" fill-opacity="0.35"/><rect x="1529.0" y="259.1" width="9.3" height="1.8" fill="#9cdcfe" fill-opacity="0.42"/><rect x="1539.5" y="259.1" width="13.5" height="1.8" fill="#d4d4d4" fill-opacity="0.29"/><rect x="1515.8" y="261.3" width="12.7" height="1.8" fill="#d4d4d4" fill-opacity="0.35"/><rect x="1529.0" y="261.3" width="9.3" height="1.8" fill="#9cdcfe" fill-opacity="0.42"/><rect x="1539.5" y="261.3" width="10.5" height="1.8" fill="#d4d4d4" fill-opacity="0.29"/><rect x="1515.8" y="263.6" width="7.2" height="1.6" fill="#dcdcaa" fill-opacity="0.39"/><rect x="1524.0" y="263.6" width="4.0" height="1.6" fill="#d4d4d4" fill-opacity="0.28"/><rect x="1530.0" y="263.6" width="13.0" height="1.6" fill="#d4d4d4" fill-opacity="0.28"/><rect x="1516.0" y="266.0" width="6.0" height="1.5" fill="#6a9955" fill-opacity="0.35"/><rect x="1524.0" y="266.0" width="5.0" height="1.5" fill="#6a9955" fill-opacity="0.35"/><rect x="1515.8" y="268.0" width="12.7" height="1.8" fill="#d4d4d4" fill-opacity="0.35"/><rect x="1529.0" y="268.0" width="9.3" height="1.8" fill="#9cdcfe" fill-opacity="0.42"/><rect x="1539.5" y="268.0" width="13.5" height="1.8" fill="#d4d4d4" fill-opacity="0.29"/><rect x="1515.8" y="270.2" width="12.7" height="1.8" fill="#d4d4d4" fill-opacity="0.35"/><rect x="1529.0" y="270.2" width="9.3" height="1.8" fill="#9cdcfe" fill-opacity="0.42"/><rect x="1539.5" y="270.2" width="10.5" height="1.8" fill="#d4d4d4" fill-opacity="0.29"/><rect x="1515.8" y="272.4" width="12.7" height="1.8" fill="#d4d4d4" fill-opacity="0.35"/><rect x="1529.0" y="272.4" width="9.3" height="1.8" fill="#9cdcfe" fill-opacity="0.42"/><rect x="1539.5" y="272.4" width="13.5" height="1.8" fill="#d4d4d4" fill-opacity="0.29"/><rect x="1515.8" y="274.6" width="12.7" height="1.8" fill="#d4d4d4" fill-opacity="0.35"/><rect x="1529.0" y="274.6" width="9.3" height="1.8" fill="#9cdcfe" fill-opacity="0.42"/><rect x="1539.5" y="274.6" width="10.5" height="1.8" fill="#d4d4d4" fill-opacity="0.29"/><rect x="1515.8" y="276.9" width="7.2" height="1.6" fill="#dcdcaa" fill-opacity="0.39"/><rect x="1524.0" y="276.9" width="4.0" height="1.6" fill="#d4d4d4" fill-opacity="0.28"/><rect x="1530.0" y="276.9" width="13.0" height="1.6" fill="#d4d4d4" fill-opacity="0.28"/><rect x="1516.0" y="279.3" width="6.0" height="1.5" fill="#6a9955" fill-opacity="0.35"/><rect x="1524.0" y="279.3" width="5.0" height="1.5" fill="#6a9955" fill-opacity="0.35"/><rect x="1515.8" y="281.3" width="12.7" height="1.8" fill="#d4d4d4" fill-opacity="0.35"/><rect x="1529.0" y="281.3" width="9.3" height="1.8" fill="#9cdcfe" fill-opacity="0.42"/><rect x="1539.5" y="281.3" width="13.5" height="1.8" fill="#d4d4d4" fill-opacity="0.29"/><rect x="1515.8" y="283.5" width="12.7" height="1.8" fill="#d4d4d4" fill-opacity="0.35"/><rect x="1529.0" y="283.5" width="9.3" height="1.8" fill="#9cdcfe" fill-opacity="0.42"/><rect x="1539.5" y="283.5" width="10.5" height="1.8" fill="#d4d4d4" fill-opacity="0.29"/><rect x="1515.8" y="285.7" width="12.7" height="1.8" fill="#d4d4d4" fill-opacity="0.35"/><rect x="1529.0" y="285.7" width="9.3" height="1.8" fill="#9cdcfe" fill-opacity="0.42"/><rect x="1539.5" y="285.7" width="13.5" height="1.8" fill="#d4d4d4" fill-opacity="0.29"/><rect x="1515.8" y="287.9" width="12.7" height="1.8" fill="#d4d4d4" fill-opacity="0.35"/><rect x="1529.0" y="287.9" width="9.3" height="1.8" fill="#9cdcfe" fill-opacity="0.42"/><rect x="1539.5" y="287.9" width="10.5" height="1.8" fill="#d4d4d4" fill-opacity="0.29"/><rect x="1515.8" y="290.2" width="7.2" height="1.6" fill="#dcdcaa" fill-opacity="0.39"/><rect x="1524.0" y="290.2" width="4.0" height="1.6" fill="#d4d4d4" fill-opacity="0.28"/><rect x="1530.0" y="290.2" width="13.0" height="1.6" fill="#d4d4d4" fill-opacity="0.28"/><rect x="1516.0" y="292.6" width="6.0" height="1.5" fill="#6a9955" fill-opacity="0.35"/><rect x="1524.0" y="292.6" width="5.0" height="1.5" fill="#6a9955" fill-opacity="0.35"/><rect x="1515.8" y="294.6" width="12.7" height="1.8" fill="#d4d4d4" fill-opacity="0.35"/><rect x="1529.0" y="294.6" width="9.3" height="1.8" fill="#9cdcfe" fill-opacity="0.42"/><rect x="1539.5" y="294.6" width="13.5" height="1.8" fill="#d4d4d4" fill-opacity="0.29"/><rect x="1515.8" y="296.8" width="12.7" height="1.8" fill="#d4d4d4" fill-opacity="0.35"/><rect x="1529.0" y="296.8" width="9.3" height="1.8" fill="#9cdcfe" fill-opacity="0.42"/><rect x="1539.5" y="296.8" width="10.5" height="1.8" fill="#d4d4d4" fill-opacity="0.29"/><rect x="1515.8" y="299.0" width="12.7" height="1.8" fill="#d4d4d4" fill-opacity="0.35"/><rect x="1529.0" y="299.0" width="9.3" height="1.8" fill="#9cdcfe" fill-opacity="0.42"/><rect x="1539.5" y="299.0" width="13.5" height="1.8" fill="#d4d4d4" fill-opacity="0.29"/><rect x="1515.8" y="301.2" width="12.7" height="1.8" fill="#d4d4d4" fill-opacity="0.35"/><rect x="1529.0" y="301.2" width="9.3" height="1.8" fill="#9cdcfe" fill-opacity="0.42"/><rect x="1539.5" y="301.2" width="10.5" height="1.8" fill="#d4d4d4" fill-opacity="0.29"/><rect x="1515.8" y="303.5" width="7.2" height="1.6" fill="#dcdcaa" fill-opacity="0.39"/><rect x="1524.0" y="303.5" width="4.0" height="1.6" fill="#d4d4d4" fill-opacity="0.28"/><rect x="1530.0" y="303.5" width="13.0" height="1.6" fill="#d4d4d4" fill-opacity="0.28"/><rect x="1516.0" y="305.9" width="6.0" height="1.5" fill="#6a9955" fill-opacity="0.35"/><rect x="1524.0" y="305.9" width="5.0" height="1.5" fill="#6a9955" fill-opacity="0.35"/><rect x="1515.8" y="307.9" width="12.7" height="1.8" fill="#d4d4d4" fill-opacity="0.35"/><rect x="1529.0" y="307.9" width="9.3" height="1.8" fill="#9cdcfe" fill-opacity="0.42"/><rect x="1539.5" y="307.9" width="13.5" height="1.8" fill="#d4d4d4" fill-opacity="0.29"/><rect x="1515.8" y="310.1" width="12.7" height="1.8" fill="#d4d4d4" fill-opacity="0.35"/><rect x="1529.0" y="310.1" width="9.3" height="1.8" fill="#9cdcfe" fill-opacity="0.42"/><rect x="1539.5" y="310.1" width="10.5" height="1.8" fill="#d4d4d4" fill-opacity="0.29"/><rect x="1515.8" y="312.3" width="12.7" height="1.8" fill="#d4d4d4" fill-opacity="0.35"/><rect x="1529.0" y="312.3" width="9.3" height="1.8" fill="#9cdcfe" fill-opacity="0.42"/><rect x="1539.5" y="312.3" width="13.5" height="1.8" fill="#d4d4d4" fill-opacity="0.29"/><rect x="1515.8" y="314.5" width="12.7" height="1.8" fill="#d4d4d4" fill-opacity="0.35"/><rect x="1529.0" y="314.5" width="9.3" height="1.8" fill="#9cdcfe" fill-opacity="0.42"/><rect x="1539.5" y="314.5" width="10.5" height="1.8" fill="#d4d4d4" fill-opacity="0.29"/><rect x="1515.8" y="316.8" width="7.2" height="1.6" fill="#dcdcaa" fill-opacity="0.39"/><rect x="1524.0" y="316.8" width="4.0" height="1.6" fill="#d4d4d4" fill-opacity="0.28"/><rect x="1530.0" y="316.8" width="13.0" height="1.6" fill="#d4d4d4" fill-opacity="0.28"/><rect x="1516.0" y="319.2" width="6.0" height="1.5" fill="#6a9955" fill-opacity="0.35"/><rect x="1524.0" y="319.2" width="5.0" height="1.5" fill="#6a9955" fill-opacity="0.35"/><rect x="1515.8" y="321.2" width="12.7" height="1.8" fill="#d4d4d4" fill-opacity="0.35"/><rect x="1529.0" y="321.2" width="9.3" height="1.8" fill="#9cdcfe" fill-opacity="0.42"/><rect x="1539.5" y="321.2" width="13.5" height="1.8" fill="#d4d4d4" fill-opacity="0.29"/><rect x="1515.8" y="323.4" width="12.7" height="1.8" fill="#d4d4d4" fill-opacity="0.35"/><rect x="1529.0" y="323.4" width="9.3" height="1.8" fill="#9cdcfe" fill-opacity="0.42"/><rect x="1539.5" y="323.4" width="10.5" height="1.8" fill="#d4d4d4" fill-opacity="0.29"/><rect x="1515.8" y="325.6" width="12.7" height="1.8" fill="#d4d4d4" fill-opacity="0.35"/><rect x="1529.0" y="325.6" width="9.3" height="1.8" fill="#9cdcfe" fill-opacity="0.42"/><rect x="1539.5" y="325.6" width="13.5" height="1.8" fill="#d4d4d4" fill-opacity="0.29"/><rect x="1515.8" y="327.8" width="12.7" height="1.8" fill="#d4d4d4" fill-opacity="0.35"/><rect x="1529.0" y="327.8" width="9.3" height="1.8" fill="#9cdcfe" fill-opacity="0.42"/><rect x="1539.5" y="327.8" width="10.5" height="1.8" fill="#d4d4d4" fill-opacity="0.29"/><rect x="1515.8" y="330.1" width="7.2" height="1.6" fill="#dcdcaa" fill-opacity="0.39"/><rect x="1524.0" y="330.1" width="4.0" height="1.6" fill="#d4d4d4" fill-opacity="0.28"/><rect x="1530.0" y="330.1" width="13.0" height="1.6" fill="#d4d4d4" fill-opacity="0.28"/><rect x="1514.0" y="331.5" width="1.5" height="1.5" fill="#d4d4d4" fill-opacity="0.35"/><rect x="1514.0" y="335.0" width="5.0" height="1.6" fill="#569cd6" fill-opacity="0.42"/><rect x="1520.0" y="335.0" width="6.0" height="1.6" fill="#dcdcaa" fill-opacity="0.35"/><rect x="1526.0" y="335.0" width="5.0" height="1.6" fill="#569cd6" fill-opacity="0.35"/><rect x="1516.0" y="337.2" width="14.0" height="1.6" fill="#dcdcaa" fill-opacity="0.35"/><rect x="1516.0" y="339.2" width="12.0" height="1.6" fill="#dcdcaa" fill-opacity="0.35"/><rect x="1516.0" y="341.2" width="18.0" height="1.4" fill="#dcdcaa" fill-opacity="0.32"/><rect x="1518.0" y="342.6" width="32.0" height="1.4" fill="#6a9955" fill-opacity="0.35"/><rect x="1515.0" y="344.4" width="5.0" height="1.4" fill="#c586c0" fill-opacity="0.42"/><rect x="1520.0" y="344.4" width="4.0" height="1.4" fill="#d4d4d4" fill-opacity="0.28"/><rect x="1516.0" y="347.0" width="1.5" height="1.5" fill="#d4d4d4" fill-opacity="0.35"/><rect x="1514.0" y="349.0" width="1.5" height="1.5" fill="#d4d4d4" fill-opacity="0.35"/></svg><div class="a" style="left:1582px;top:85px;width:1.5px;height:746px;background:#303030"></div><div class="a" style="left:1582px;top:135px;width:18px;height:113px;background:#444444"></div><div class="a" style="left:1583px;top:135px;width:17px;height:2px;background:#9a9a9a"></div><div class="a" style="left:1588px;top:135px;width:7px;height:6px;background:#a6a6a6;box-shadow:0 0 0 1px #101010"></div><div class="a" style="left:1588px;top:669.5px;width:7px;height:7px;background:#a6a6a6;box-shadow:0 0 0 1px #101010"></div>
<!-- STATUS -->
<div id="status" class="a"></div>
<svg class="a" style="left:13px;top:837px" width="16" height="16" viewBox="0 0 16 16"><circle cx="8.2" cy="8" r="6.4" fill="#ffffff"/><path d="M5.1,4.9 L11.3,11.1 M11.3,4.9 L5.1,11.1" stroke="#007acc" stroke-width="1.5"/></svg>
<div class="st" style="left:34px">0</div>
<svg class="a" style="left:47px;top:837px" width="14" height="15" viewBox="0 0 14 15"><path d="M6.5,1 L13,13.8 H0.5 Z" fill="#ffffff"/><path d="M6.75,5.5 V10.2 M6.75,11.3 V12.5" stroke="#007acc" stroke-width="1.1"/></svg>
<div class="st" style="left:65px">0</div>
<div class="st" style="left:1003.5px;letter-spacing:0.2px">vpc_gpio_init(void)</div>
<div class="st" style="left:1151px">Ln 14, Col 26</div>
<div class="st" style="left:1251px;letter-spacing:-0.35px">Spaces: 2</div>
<div class="st" style="left:1330px">UTF-8</div>
<div class="st" style="left:1386px">LF</div>
<div class="st" style="left:1419px">C</div>
<div class="st" style="left:1446px">Linux</div>
<svg class="a" style="left:1496px;top:836px" width="17" height="17" viewBox="0 0 17 17"><g fill="#ffffff"><ellipse cx="8.5" cy="3.5" rx="6.5" ry="2.5"/><path d="M2,5.5 Q8.5,9 15,5.5 V8 Q8.5,11.5 2,8 Z"/><path d="M2,9.5 Q8.5,13 15,9.5 V12 Q8.5,15.5 2,12 Z"/></g></svg>
<svg class="a" style="left:1529px;top:836px" width="19" height="18" viewBox="0 0 19 18"><circle cx="9.5" cy="9" r="8.3" fill="#ffffff"/><circle cx="6.5" cy="6.8" r="1.5" fill="#007acc"/><circle cx="12.5" cy="6.8" r="1.5" fill="#007acc"/><path d="M5,10.5 Q9.5,15.5 14,10.5" fill="none" stroke="#007acc" stroke-width="1.8"/></svg>
<svg class="a" style="left:1564px;top:835px" width="18" height="19" viewBox="0 0 18 19"><path d="M9,1.5 Q14,2 14.5,8 V12.5 L16.5,14.5 H1.5 L3.5,12.5 V8 Q4,2 9,1.5 Z" fill="#ffffff"/><circle cx="9" cy="16.3" r="1.8" fill="#ffffff"/></svg>

</body></html>
